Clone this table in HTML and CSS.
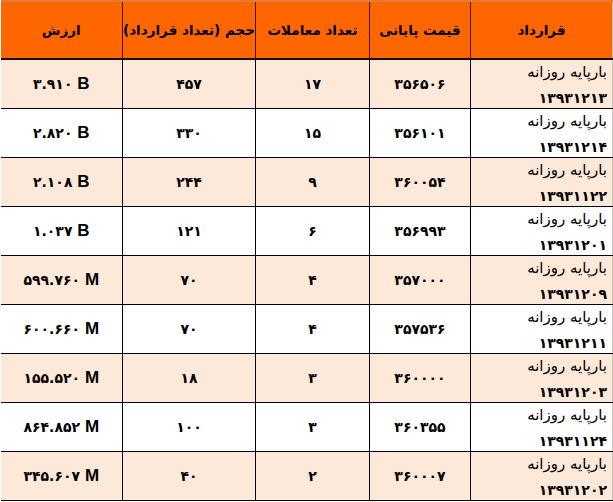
FILE: index.html
```html
<!DOCTYPE html>
<html lang="fa" dir="rtl">
<head>
<meta charset="utf-8">
<title>قرارداد</title>
<link rel="stylesheet" href="styles.css">
</head>
<body>
<table class="grid">
  <colgroup>
    <col class="c-contract">
    <col class="c-price">
    <col class="c-count">
    <col class="c-volume">
    <col class="c-value">
  </colgroup>
  <thead>
    <tr>
      <th>قرارداد</th>
      <th>قیمت پایانی</th>
      <th>تعداد معاملات</th>
      <th>حجم (تعداد قرارداد)</th>
      <th>ارزش</th>
    </tr>
  </thead>
  <tbody>
    <tr class="odd">
      <td class="name"><div class="label">بارپایه روزانه</div><div class="date">۱۳۹۳۱۲۱۳</div></td>
      <td>۳۵۶۵۰۶</td><td>۱۷</td><td>۴۵۷</td>
      <td><span class="amt" dir="ltr">۳.۹۱۰ <b>B</b></span></td>
    </tr>
    <tr>
      <td class="name"><div class="label">بارپایه روزانه</div><div class="date">۱۳۹۳۱۲۱۴</div></td>
      <td>۳۵۶۱۰۱</td><td>۱۵</td><td>۳۳۰</td>
      <td><span class="amt" dir="ltr">۲.۸۲۰ <b>B</b></span></td>
    </tr>
    <tr class="odd">
      <td class="name"><div class="label">بارپایه روزانه</div><div class="date">۱۳۹۳۱۱۲۲</div></td>
      <td>۳۶۰۰۵۴</td><td>۹</td><td>۲۴۴</td>
      <td><span class="amt" dir="ltr">۲.۱۰۸ <b>B</b></span></td>
    </tr>
    <tr>
      <td class="name"><div class="label">بارپایه روزانه</div><div class="date">۱۳۹۳۱۲۰۱</div></td>
      <td>۳۵۶۹۹۳</td><td>۶</td><td>۱۲۱</td>
      <td><span class="amt" dir="ltr">۱.۰۳۷ <b>B</b></span></td>
    </tr>
    <tr class="odd">
      <td class="name"><div class="label">بارپایه روزانه</div><div class="date">۱۳۹۳۱۲۰۹</div></td>
      <td>۳۵۷۰۰۰</td><td>۴</td><td>۷۰</td>
      <td><span class="amt" dir="ltr">۵۹۹.۷۶۰ <b>M</b></span></td>
    </tr>
    <tr>
      <td class="name"><div class="label">بارپایه روزانه</div><div class="date">۱۳۹۳۱۲۱۱</div></td>
      <td>۳۵۷۵۳۶</td><td>۴</td><td>۷۰</td>
      <td><span class="amt" dir="ltr">۶۰۰.۶۶۰ <b>M</b></span></td>
    </tr>
    <tr class="odd">
      <td class="name"><div class="label">بارپایه روزانه</div><div class="date">۱۳۹۳۱۲۰۳</div></td>
      <td>۳۶۰۰۰۰</td><td>۳</td><td>۱۸</td>
      <td><span class="amt" dir="ltr">۱۵۵.۵۲۰ <b>M</b></span></td>
    </tr>
    <tr>
      <td class="name"><div class="label">بارپایه روزانه</div><div class="date">۱۳۹۳۱۱۲۴</div></td>
      <td>۳۶۰۳۵۵</td><td>۳</td><td>۱۰۰</td>
      <td><span class="amt" dir="ltr">۸۶۴.۸۵۲ <b>M</b></span></td>
    </tr>
    <tr class="odd">
      <td class="name"><div class="label">بارپایه روزانه</div><div class="date">۱۳۹۳۱۲۰۲</div></td>
      <td>۳۶۰۰۰۷</td><td>۲</td><td>۴۰</td>
      <td><span class="amt" dir="ltr">۳۴۵.۶۰۷ <b>M</b></span></td>
    </tr>
  </tbody>
</table>
</body>
</html>
```
FILE: styles.css
```css
html, body {
  margin: 0;
  padding: 0;
  background: #ffffff;
}
body {
  font-family: "DejaVu Sans", "Noto Sans", sans-serif;
  color: #000;
}
.grid {
  border-collapse: collapse;
  table-layout: fixed;
  width: 612px;
  border-top: 2px solid #e07b3c;
}
.c-contract { width: 142px; }
.c-price { width: 101px; }
.c-count { width: 114px; }
.c-volume { width: 133px; }
.c-value { width: 122px; }

.grid th {
  background: #ff6600;
  height: 56px;
  padding: 0;
  font-size: 13.5px;
  font-weight: bold;
  text-align: center;
  border-left: 1px solid #3a1a00;
  border-bottom: 2px solid #1a0a00;
  white-space: nowrap;
}
.grid th:first-child { border-right: 1px solid #c9c0b8; }
.grid td {
  height: 47px;
  padding: 0;
  font-size: 14px;
  font-weight: bold;
  text-align: center;
  border-left: 1px solid #000;
  border-bottom: 1.5px solid #000;
  background: #ffffff;
}
.grid td:first-child { border-right: 1px solid #c9c0b8; }
.grid th:last-child, .grid td:last-child { border-left: none; }
.grid tr.odd td { background: #fde9d9; }

.grid td.name {
  text-align: right;
  padding-right: 5px;
  vertical-align: top;
}
.name .label {
  font-weight: normal;
  font-size: 15px;
  line-height: 24px;
}
.name .date {
  font-weight: bold;
  font-size: 14px;
  line-height: 20px;
  margin-top: 4px;
}

.amt { display: inline-block; }
.amt b {
  font-family: "Liberation Sans", Arial, sans-serif;
  font-size: 17px;
  font-weight: bold;
}
```
